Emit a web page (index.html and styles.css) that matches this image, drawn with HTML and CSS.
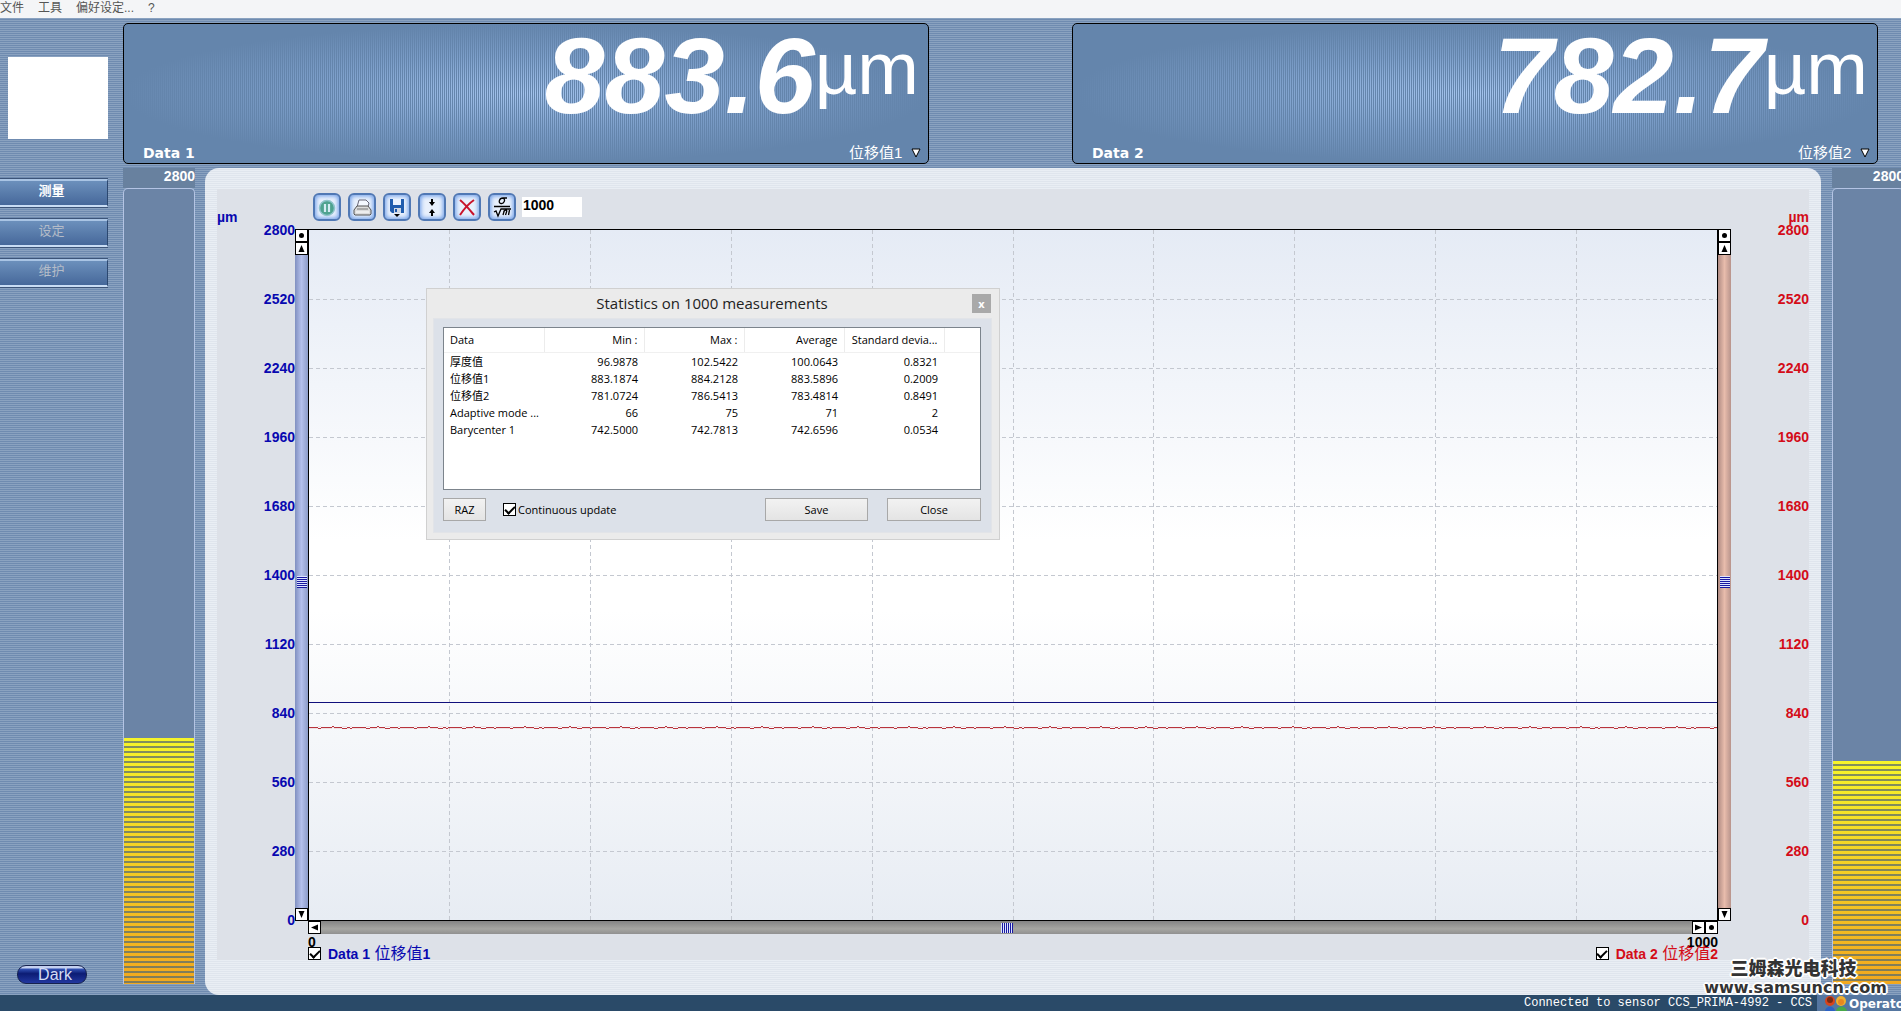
FILE: index.html
```html
<!DOCTYPE html>
<html lang="zh-CN">
<head>
<meta charset="utf-8">
<title>CCS Prima</title>
<link rel="stylesheet" href="styles.css">
</head>
<body>
<nav class="menubar">
  <a href="#file">文件</a><a href="#tools">工具</a><a href="#prefs">偏好设定...</a><a href="#help">?</a>
</nav>

<div class="workspace">
  <aside class="sidebar">
    <div class="logo"></div>
    <div class="tabs">
      <button class="tab tab-active" type="button">测量</button>
      <button class="tab" type="button">设定</button>
      <button class="tab" type="button">维护</button>
    </div>
    <button class="dark-button" type="button">Dark</button>
  </aside>

  <div class="stage">
    <header class="displays">
      <section class="display">
        <div class="reading"><span class="value">883.6</span><span class="unit">µm</span></div>
        <div class="display-foot">
          <label for="source1">Data 1</label>
          <span class="picker">
            <select id="source1"><option>位移值1</option></select>
            <svg width="10" height="10" viewBox="0 0 10 10"><path d="M1 1h8L5 9z" fill="#fff" stroke="#000"/></svg>
          </span>
        </div>
      </section>
      <section class="display">
        <div class="reading"><span class="value">782.7</span><span class="unit">µm</span></div>
        <div class="display-foot">
          <label for="source2">Data 2</label>
          <span class="picker">
            <select id="source2"><option>位移值2</option></select>
            <svg width="10" height="10" viewBox="0 0 10 10"><path d="M1 1h8L5 9z" fill="#fff" stroke="#000"/></svg>
          </span>
        </div>
      </section>
    </header>

    <div class="content">
      <div class="meter">
        <div class="meter-max">2800</div>
        <div class="meter-track"><div class="meter-fill" style="height:31%"></div></div>
      </div>

      <main class="panel">
        <div class="chart-area">
          <div class="toolbar">
            <span class="axis-unit blue">µm</span>
            <div class="tools">
              <button class="tool" type="button" aria-label="Pause"><svg width="22" height="22" viewBox="0 0 22 22"><circle cx="11" cy="12" r="7.5" fill="#4fa38f" stroke="#8fc4cc" stroke-width="1.5"/><path d="M9 8v8M13 8v8" stroke="#d4ecf4" stroke-width="2.2"/></svg></button>
              <button class="tool" type="button" aria-label="Print"><svg width="22" height="22" viewBox="0 0 22 22"><path d="M6 11 8 4h7l3 3-1 4" fill="#f4f8ff" stroke="#667"/><path d="M3 14l3-4h11l3 4v4l-1 1H4l-1-1z" fill="#dcdcdc" stroke="#555"/><path d="M6 13h11" stroke="#777"/><path d="M5 16h13" stroke="#fff"/></svg></button>
              <button class="tool" type="button" aria-label="Save"><svg width="22" height="22" viewBox="0 0 22 22"><path d="M4 3h14v14H6l-2-2z" fill="#1f5cae"/><path d="M7 3h8v6H7z" fill="#e9f2ff"/><path d="M8 12h7v5H8z" fill="#cfd8e4"/><path d="M9 13h2v3H9z" fill="#1f56a8"/><path d="M8 18h6l-3 3z" fill="#000"/></svg></button>
              <button class="tool" type="button" aria-label="Fit vertically"><svg width="22" height="22" viewBox="0 0 22 22"><path d="M10 3h2v3h2l-3 4-3-4h2zM10 20h2v-3h2l-3-4-3 4h2z"/></svg></button>
              <button class="tool" type="button" aria-label="Clear"><svg width="22" height="22" viewBox="0 0 22 22"><path d="M4 4c5 4 9 9 14 15M18 4C12 8 8 13 4 19" stroke="#c8142c" stroke-width="2" fill="none"/></svg></button>
              <button class="tool" type="button" aria-label="Statistics"><svg width="22" height="22" viewBox="0 0 22 22" fill="none" stroke="#000" stroke-width="1.300"><path d="M3 10.500h16M16 2h-4c-4 0-5 5-2 5.500s5-4 2-5.500M3 16l2-1 2 5 3-7h10M12 19l1.500-5M12.500 16c2-3 4-2 3 0l-1 3M17.500 19l1-5"/></svg></button>
              <input class="count" type="text" value="1000" aria-label="Number of measurements">
            </div>
            <span class="axis-unit red">µm</span>
          </div>

          <div class="chart">
            <ul class="scale blue">
              <li>2800</li><li>2520</li><li>2240</li><li>1960</li><li>1680</li><li>1400</li><li>1120</li><li>840</li><li>560</li><li>280</li><li>0</li>
            </ul>
            <div class="slider slider-v slider-blue">
              <button class="nub" type="button" aria-label="Reset left axis"><svg width="11" height="11" viewBox="0 0 11 11"><circle cx="5.500" cy="5.500" r="2.500"/></svg></button>
              <button class="nub" type="button" aria-label="Left axis up"><svg width="11" height="11" viewBox="0 0 11 11"><path d="M5.500 2 8.500 9h-6z"/></svg></button>
              <div class="rail"><span class="grip"></span></div>
              <button class="nub" type="button" aria-label="Left axis down"><svg width="11" height="11" viewBox="0 0 11 11"><path d="M5.500 9 8.500 2h-6z"/></svg></button>
            </div>
            <div class="plot">
              <svg class="plot-canvas" width="100%" height="100%">
                <defs>
                  <pattern id="ripple" width="96" height="3" patternUnits="userSpaceOnUse">
                    <path d="M0 1.500h9m0 1h3m0-1h11m0-1h2m0 1h8m0 1h5m0-1h3m0 1h2m0-1h14m0 1h4m0-1h7m0-1h2m0 1h6m0 1h5m0-1h8m0 1h2m0-1h5" fill="none" stroke="#b01c24"/>
                  </pattern>
                </defs>
                <g class="grid">
                  <line x1="10%" x2="10%" y2="100%"/><line x1="20%" x2="20%" y2="100%"/><line x1="30%" x2="30%" y2="100%"/><line x1="40%" x2="40%" y2="100%"/><line x1="50%" x2="50%" y2="100%"/><line x1="60%" x2="60%" y2="100%"/><line x1="70%" x2="70%" y2="100%"/><line x1="80%" x2="80%" y2="100%"/><line x1="90%" x2="90%" y2="100%"/>
                  <line y1="10%" y2="10%" x2="100%"/><line y1="20%" y2="20%" x2="100%"/><line y1="30%" y2="30%" x2="100%"/><line y1="40%" y2="40%" x2="100%"/><line y1="50%" y2="50%" x2="100%"/><line y1="60%" y2="60%" x2="100%"/><line y1="70%" y2="70%" x2="100%"/><line y1="80%" y2="80%" x2="100%"/><line y1="90%" y2="90%" x2="100%"/>
                </g>
                <line class="trace" y1="68.500%" y2="68.500%" x2="100%"/>
                <svg y="71.900%" width="100%" height="3"><rect width="100%" height="3" fill="url(#ripple)" shape-rendering="crispEdges"/></svg>
              </svg>
            </div>
            <div class="slider slider-v slider-red">
              <button class="nub" type="button" aria-label="Reset right axis"><svg width="11" height="11" viewBox="0 0 11 11"><circle cx="5.500" cy="5.500" r="2.500"/></svg></button>
              <button class="nub" type="button" aria-label="Right axis up"><svg width="11" height="11" viewBox="0 0 11 11"><path d="M5.500 2 8.500 9h-6z"/></svg></button>
              <div class="rail"><span class="grip"></span></div>
              <button class="nub" type="button" aria-label="Right axis down"><svg width="11" height="11" viewBox="0 0 11 11"><path d="M5.500 9 8.500 2h-6z"/></svg></button>
            </div>
            <ul class="scale red">
              <li>2800</li><li>2520</li><li>2240</li><li>1960</li><li>1680</li><li>1400</li><li>1120</li><li>840</li><li>560</li><li>280</li><li>0</li>
            </ul>

            <div class="below">
              <div class="slider slider-h">
                <button class="nub" type="button" aria-label="Scroll left"><svg width="11" height="11" viewBox="0 0 11 11"><path d="M2 5.500 9 2.500v6z"/></svg></button>
                <div class="rail"><span class="grip"></span></div>
                <button class="nub" type="button" aria-label="Scroll right"><svg width="11" height="11" viewBox="0 0 11 11"><path d="M9 5.500 2 2.500v6z"/></svg></button>
                <button class="nub" type="button" aria-label="Reset time axis"><svg width="11" height="11" viewBox="0 0 11 11"><circle cx="5.500" cy="5.500" r="2.500"/></svg></button>
              </div>
              <div class="time-scale"><span>0</span><span>1000</span></div>
              <div class="legend">
                <label class="blue"><input class="check" type="checkbox" checked><span><b>Data 1</b> 位移值<b>1</b></span></label>
                <label class="red"><input class="check" type="checkbox" checked><span><b>Data 2</b> 位移值<b>2</b></span></label>
              </div>
            </div>
          </div>
        </div>
      </main>

      <div class="meter meter-right">
        <div class="meter-max">2800</div>
        <div class="meter-track"><div class="meter-fill" style="height:28%"></div></div>
      </div>
    </div>
  </div>
</div>

<footer class="status">
  <span class="connection">Connected to sensor CCS_PRIMA-4992 - CCS M</span>
  <span class="operator">
    <svg width="22" height="16" viewBox="0 0 22 16"><circle cx="5" cy="6" r="5" fill="#d8441c"/><circle cx="5" cy="5" r="3" fill="#7a2a14"/><circle cx="16" cy="6" r="5" fill="#f0b030"/><circle cx="16" cy="7" r="3" fill="#e88820"/><path d="M0 16c1-6 9-6 10 0z" fill="#2c62c4"/><path d="M11 16c1-6 10-6 11 0z" fill="#48a848"/></svg>
    <span>Operator</span>
  </span>
</footer>

<div class="watermark"><div class="mark-name">三姆森光电科技</div><div class="mark-site">www.samsuncn.com</div></div>

<section class="dialog" role="dialog" aria-labelledby="dialog-title">
  <div class="dialog-title"><h1 id="dialog-title">Statistics on 1000 measurements</h1><button class="dialog-x" type="button" aria-label="Close window">x</button></div>
  <div class="dialog-body">
    <div class="list">
      <table>
        <thead><tr><th>Data</th><th>Min :</th><th>Max :</th><th>Average</th><th>Standard devia...</th><th></th></tr></thead>
        <tbody>
          <tr><td>厚度值</td><td>96.9878</td><td>102.5422</td><td>100.0643</td><td>0.8321</td><td></td></tr>
          <tr><td>位移值1</td><td>883.1874</td><td>884.2128</td><td>883.5896</td><td>0.2009</td><td></td></tr>
          <tr><td>位移值2</td><td>781.0724</td><td>786.5413</td><td>783.4814</td><td>0.8491</td><td></td></tr>
          <tr><td>Adaptive mode ...</td><td>66</td><td>75</td><td>71</td><td>2</td><td></td></tr>
          <tr><td>Barycenter 1</td><td>742.5000</td><td>742.7813</td><td>742.6596</td><td>0.0534</td><td></td></tr>
        </tbody>
      </table>
    </div>
    <div class="dialog-actions">
      <button class="btn btn-raz" type="button">RAZ</button>
      <label class="update"><input class="check" type="checkbox" checked>Continuous update</label>
      <button class="btn btn-save" type="button">Save</button>
      <button class="btn btn-close" type="button">Close</button>
    </div>
  </div>
</section>
</body>
</html>
```

FILE: styles.css
```css
* { box-sizing: border-box; }

body {
  margin: 0;
  min-height: 100vh;
  display: flex;
  flex-direction: column;
  position: relative;
  overflow: hidden;
  font-family: "Liberation Sans", "Noto Sans CJK SC", sans-serif;
  font-size: 14px;
  color: #000;
  background: repeating-linear-gradient(#8aa2c0 0 1px, #6f8bb0 1px 2px);
}

button, input, select { font: inherit; margin: 0; padding: 0; }

ul { list-style: none; margin: 0; padding: 0; }

svg { display: block; }

.blue { color: #0808b0; }
.red { color: #d40c18; }

/* menu */
.menubar {
  height: 18px;
  display: flex;
  gap: 14px;
  background: #f4f5f7;
  font-size: 12px;
  line-height: 16px;
}
.menubar a { color: #555; text-decoration: none; }

.workspace { flex: 1; display: flex; }

/* sidebar */
.sidebar {
  width: 123px;
  display: flex;
  flex-direction: column;
  align-items: flex-start;
  padding: 39px 0 11px;
}
.logo { width: 100px; height: 82px; margin-left: 8px; background: #fff; }
.tabs { margin-top: 40px; display: flex; flex-direction: column; gap: 12px; }
.tab {
  width: 108px;
  height: 28px;
  padding: 0 4px 4px 0;
  border: solid;
  border-width: 2px 1px 2px 0;
  border-color: #a9c4e4 #2c4870 #c8dcf4 #2c4870;
  background: linear-gradient(#6c90bc, #46689a);
  box-shadow: 0 -1px 0 #3c5478, 0 1px 0 #3c5478;
  color: #b4bcc8;
  font-size: 13px;
  line-height: 18px;
}
.tab-active { color: #fff; font-weight: bold; }
.dark-button {
  margin: auto 0 0 17px;
  width: 70px;
  height: 19px;
  padding-left: 6px;
  border: 1px solid #16224e;
  border-radius: 9px;
  background: linear-gradient(#c4d0f0 0 2px, #3050b4 3px, #0c1c74 45%, #2238a0);
  color: #d4dcf4;
  font-size: 16px;
  line-height: 15px;
}

.stage { flex: 1; min-width: 0; display: flex; flex-direction: column; }

/* numeric displays */
.displays {
  height: 150px;
  display: grid;
  grid-template-columns: 1fr 1fr;
  gap: 143px;
  padding: 5px 23px 4px 0;
}
.display {
  display: flex;
  flex-direction: column;
  justify-content: space-between;
  border: 1px solid #000;
  border-radius: 5px;
  background:
    repeating-linear-gradient(90deg, #6485ac 0 1px, transparent 1px 2px),
    radial-gradient(closest-side, #a4c4ee, #7c9ec9 55%, #6485ac);
  color: #fff;
}
.reading {
  height: 104px;
  padding-right: 9px;
  display: flex;
  justify-content: flex-end;
  align-items: flex-start;
}
.value { font-size: 108px; font-style: italic; font-weight: bold; line-height: 104px; }
.unit { font-size: 74px; line-height: 90px; }
.display-foot {
  height: 21px;
  padding: 0 7px 0 19px;
  display: flex;
  justify-content: space-between;
  align-items: center;
  font-size: 14px;
}
.display-foot label { font-family: "DejaVu Sans", sans-serif; font-weight: bold; }
.picker { display: flex; align-items: center; gap: 8px; }
.picker select {
  appearance: none;
  border: 0;
  background: transparent;
  color: #fff;
  font-size: 15px;
}

.content { flex: 1; display: flex; }

/* bar meters */
.meter { width: 72px; display: flex; flex-direction: column; padding-bottom: 11px; }
.meter-right { flex: none; margin-right: -3px; }
.meter-max {
  height: 20px;
  background: #68819f;
  color: #fff;
  font-weight: bold;
  line-height: 16px;
  text-align: right;
}
.meter-track {
  flex: 1;
  display: flex;
  flex-direction: column;
  justify-content: flex-end;
  border: 1px solid #b4c4e4;
  border-bottom: 0;
  border-radius: 5px 5px 0 0;
  background: #6b84a6;
}
.meter-fill {
  background:
    repeating-linear-gradient(transparent 0 3px, rgb(90 110 110 / 75%) 3px 5px),
    linear-gradient(#f6f42a, #f2a81e);
}

/* chart panel */
.panel {
  flex: 1;
  margin: 0 11px 0 10px;
  padding: 21px 12px 35px;
  display: flex;
  border-radius: 14px;
  background: repeating-linear-gradient(#e9eef4 0 1px, #dfe5ed 1px 2px);
}
.chart-area { flex: 1; display: flex; flex-direction: column; background: #dde1e8; }
.toolbar { height: 40px; display: flex; padding-top: 4px; }
.tools { flex: 1; display: flex; align-items: flex-start; gap: 7px; }
.axis-unit { width: 96px; padding-top: 15px; font-weight: bold; line-height: 18px; }
.axis-unit.red { text-align: right; }
.tool {
  width: 28px;
  height: 28px;
  display: grid;
  place-items: center;
  border: 2px solid #5078b4;
  border-radius: 6px;
  background: #e8f0fc;
  box-shadow: inset 0 0 4px 1px #6c9ce8;
}
.count {
  width: 60px;
  height: 20px;
  margin: 4px 0 0 -1px;
  padding: 0 0 4px 1px;
  border: 0;
  background: #fff;
  font-weight: bold;
}

.chart {
  flex: 1;
  display: grid;
  grid-template: 1fr 39px / 78px 13px 1fr 13px 78px;
}
.scale {
  margin: -7px 0;
  display: flex;
  flex-direction: column;
  justify-content: space-between;
  text-align: right;
  font-weight: bold;
  line-height: 16px;
}
.plot {
  border: 1px solid #000;
  background: linear-gradient(#e5ebf5, #fff 45%, #fff 55%, #e7ecf3);
}
.plot-canvas { height: 100%; }
.grid { stroke: #c4c8d0; stroke-dasharray: 4 3; shape-rendering: crispEdges; }
.trace { stroke: #10107c; shape-rendering: crispEdges; }

.slider { display: flex; }
.slider-v { flex-direction: column; }
.slider-h { height: 13px; }
.nub {
  width: 13px;
  height: 13px;
  flex: none;
  border: 1px solid #000;
  background: #fff;
}
.rail { flex: 1; display: flex; align-items: center; justify-content: center; }
.slider-blue .rail { background: linear-gradient(90deg, #8090c0, #b4c0ec 50%, #8c9cc8); }
.slider-red .rail { background: linear-gradient(90deg, #b08c84, #e8bcac 50%, #b8948c); }
.slider-h .rail { background: linear-gradient(#848484, #a6a6a2 60%, #909090); }
.grip { width: 10px; height: 12px; background: repeating-linear-gradient(#dce4ff 0 1px, #1818a0 1px 2px); }
.slider-h .grip { width: 12px; height: 10px; background: repeating-linear-gradient(90deg, #dce4ff 0 1px, #1818a0 1px 2px); }

.below { grid-column: 3; }
.time-scale {
  height: 13px;
  display: flex;
  justify-content: space-between;
  font-weight: bold;
  line-height: 16px;
}
.legend { height: 13px; display: flex; justify-content: space-between; }
.legend label { display: flex; align-items: center; gap: 7px; font-size: 16px; line-height: 13px; white-space: nowrap; }
.legend b { font-size: 14px; }

.check {
  appearance: none;
  width: 13px;
  height: 13px;
  flex: none;
  border: 1px solid #000;
  background: #fff;
  display: grid;
  place-items: center;
}
.check:checked::before {
  content: "";
  width: 8px;
  height: 4px;
  margin-bottom: 2px;
  border: solid #000;
  border-width: 0 0 2px 2px;
  transform: rotate(-45deg);
}

/* status bar */
.status {
  height: 16px;
  display: flex;
  justify-content: flex-end;
  background: #2a4a68;
  color: #fff;
  overflow: hidden;
}
.connection {
  width: 293px;
  overflow: hidden;
  white-space: nowrap;
  font: 12px/16px "Liberation Mono", monospace;
}
.operator {
  width: 84px;
  padding-left: 8px;
  display: flex;
  gap: 2px;
  overflow: hidden;
  background: #5576a0;
  font: bold 12px/18px "DejaVu Sans", sans-serif;
}
.operator svg { flex: none; }

.watermark {
  position: absolute;
  right: 14px;
  bottom: 13px;
  display: flex;
  flex-direction: column;
  align-items: center;
  color: #333;
  font-weight: bold;
  text-shadow: 1px 1px 0 #fff, -1px -1px 0 #fff, 1px -1px 0 #fff, -1px 1px 0 #fff, 2px 0 0 #fff, -2px 0 0 #fff, 0 2px 0 #fff, 0 -2px 0 #fff;
}
.mark-name { padding-right: 4px; font: 900 18px/22px "Noto Sans CJK SC", sans-serif; }
.mark-site { font: bold 16px/20px "DejaVu Sans", sans-serif; }

/* statistics dialog */
.dialog {
  position: absolute;
  left: 426px;
  top: 288px;
  width: 574px;
  padding: 0 7px 6px 6px;
  border: 1px solid #d0d0d0;
  background: #ebebeb;
  font: 11px/17px "Open Sans", "Noto Sans CJK SC", sans-serif;
}
.dialog-title { height: 29px; padding-left: 19px; display: flex; align-items: center; }
.dialog-title h1 { flex: 1; margin: 0; text-align: center; font-size: 15px; font-weight: 400; color: #222; }
.dialog-x {
  width: 19px;
  height: 19px;
  margin-right: 1px;
  border: 0;
  background: #a9a9a9;
  color: #fff;
  font-weight: bold;
  line-height: 17px;
}
.dialog-body { padding: 8px 10px 11px 9px; border: 1px solid #e2e4e8; background: #dce1e9; }
.list { height: 163px; border: 1px solid #7c848c; background: #fff; }
.list table { width: 100%; border-collapse: collapse; table-layout: fixed; }
.list th, .list td { padding: 0 6px 0 0; text-align: right; font-weight: 400; white-space: nowrap; height: 17px; }
.list th { width: 100px; height: 24px; border-right: 1px solid #ececec; border-bottom: 1px solid #f0f0f0; }
.list th:last-child { width: auto; border-right: 0; }
.list th:first-child, .list td:first-child { padding-left: 6px; text-align: left; }
.list td:first-child { line-height: 15px; }
.dialog-actions { margin-top: 8px; display: flex; align-items: center; }
.btn {
  height: 23px;
  border: 1px solid #a8a8a8;
  background: linear-gradient(#f2f2f2, #e4e4e4);
  font-size: 11px;
}
.btn-raz { width: 43px; }
.update { margin: 0 auto 0 17px; display: flex; align-items: center; gap: 2px; }
.btn-save { width: 103px; margin-right: 19px; }
.btn-close { width: 94px; }
```
